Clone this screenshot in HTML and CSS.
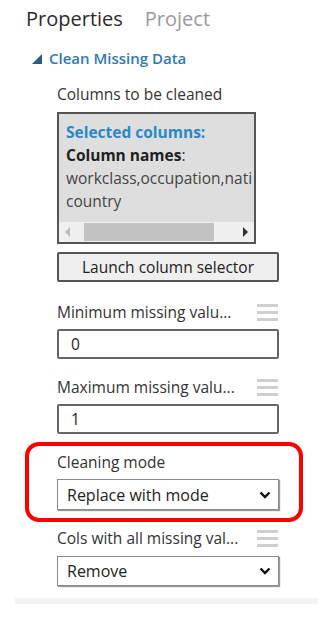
FILE: index.html
```html
<!DOCTYPE html>
<html lang="en">

<head>
    <meta charset="UTF-8">
    <title>Properties</title>
    <link rel="stylesheet" href="styles.css">
</head>

<body>
    <div class="tabs">
        <span class="tab active">Properties</span>
        <span class="tab">Project</span>
    </div>
    <div class="section-title">
        <span class="caret"></span>
        <span>Clean Missing Data</span>
    </div>
    <div class="content">
        <div class="label first">Columns to be cleaned</div>
        <div class="col-box">
            <div class="col-text">
                <div class="sel-title">Selected columns:</div>
                <div class="col-names"><b>Column names</b>:</div>
                <div class="col-list">workclass,occupation,nati</div>
                <div class="col-list">country</div>
            </div>
            <div class="hscroll">
                <span class="arr arr-left"></span>
                <span class="thumb"></span>
                <span class="arr arr-right"></span>
            </div>
        </div>
        <button class="btn">Launch column selector</button>

        <div class="label-row">
            <span>Minimum missing valu...</span>
            <span class="menu"><i></i><i></i><i></i></span>
        </div>
        <div class="input">0</div>

        <div class="label-row">
            <span>Maximum missing valu...</span>
            <span class="menu"><i></i><i></i><i></i></span>
        </div>
        <div class="input">1</div>

        <div class="highlight">
            <div class="label-row plain">
                <span>Cleaning mode</span>
            </div>
            <div class="select">
                <span>Replace with mode</span>
                <svg width="12" height="8" viewBox="0 0 12 8"><path d="M1.5 1.5 L6 6 L10.5 1.5" fill="none" stroke="#111" stroke-width="2.4"/></svg>
            </div>
        </div>

        <div class="label-row after">
            <span>Cols with all missing val...</span>
            <span class="menu"><i></i><i></i><i></i></span>
        </div>
        <div class="select last">
            <span>Remove</span>
            <svg width="12" height="8" viewBox="0 0 12 8"><path d="M1.5 1.5 L6 6 L10.5 1.5" fill="none" stroke="#111" stroke-width="2.4"/></svg>
        </div>
    </div>
    <div class="footer-band"></div>
</body>

</html>
```

FILE: styles.css
```css
* {
    box-sizing: border-box;
}

body {
    margin: 0;
    background: #fff;
    font-family: "Open Sans", "Noto Sans", sans-serif;
    color: #333;
}

.tabs {
    height: 40px;
    padding: 4px 0 0 26px;
    display: flex;
    gap: 22px;
    font-size: 20px;
    line-height: 30px;
}

.tab {
    color: #9a9a9a;
}

.tab.active {
    color: #2b2b2b;
}

.section-title {
    height: 36px;
    padding-left: 32px;
    display: flex;
    align-items: center;
    gap: 7px;
    font-size: 15px;
    font-weight: 600;
    color: #3079b5;
}

.caret {
    width: 0;
    height: 0;
    border-left: 10px solid transparent;
    border-bottom: 10px solid #2a5d86;
    margin-top: 2px;
}

.content {
    padding-left: 57px;
    width: 279px;
    font-size: 15.5px;
}

.label.first {
    height: 36px;
    line-height: 36px;
}

.col-box {
    width: 199px;
    height: 132px;
    border: 2px solid #555;
    background: #dedede;
    display: flex;
    flex-direction: column;
}

.col-text {
    flex: 1;
    padding: 7px 0 0 7px;
    line-height: 23px;
    white-space: nowrap;
}

.sel-title {
    color: #2a88c8;
    font-weight: 700;
}

.col-names b {
    color: #1f1f1f;
}

.col-list {
    color: #444;
}

.hscroll {
    height: 20px;
    background: #f0f0f0;
    display: flex;
    align-items: center;
    padding: 0 6px;
}

.thumb {
    width: 130px;
    height: 18px;
    background: #c2c2c2;
    margin: 0 auto 0 14px;
}

.arr {
    width: 0;
    height: 0;
    border-top: 5px solid transparent;
    border-bottom: 5px solid transparent;
}

.arr-left {
    border-right: 5px solid #bbb;
}

.arr-right {
    border-left: 5px solid #333;
}

.btn {
    display: block;
    margin-top: 8px;
    width: 222px;
    height: 30px;
    border: 2px solid #555;
    border-radius: 2px;
    background: #efefef;
    font-family: inherit;
    font-size: 15.5px;
    color: #222;
    padding: 0;
}

.label-row {
    margin-top: 18px;
    height: 24px;
    line-height: 24px;
    display: flex;
    justify-content: space-between;
    align-items: center;
    width: 222px;
}

.menu {
    width: 21px;
    display: flex;
    flex-direction: column;
    gap: 4px;
    margin-right: 1px;
}

.menu i {
    display: block;
    height: 3px;
    background: #cfcfcf;
}

.input {
    margin-top: 5px;
    width: 222px;
    height: 30px;
    border: 2px solid #666;
    border-radius: 2px;
    padding-left: 12px;
    line-height: 26px;
    color: #222;
    margin-bottom: -1px;
}

.input + .label-row {
    margin-top: 17px;
}

.highlight {
    margin: 9px 0 0 -32px;
    width: 278px;
    height: 80px;
    border: 4px solid #f00;
    border-radius: 14px;
    padding: 4px 20px 0 28px;
}

.label-row.plain {
    margin-top: 0;
}

.select {
    margin-top: 5px;
    width: 222px;
    height: 31px;
    border: 1px solid #8a8a8a;
    box-shadow: 1px 1px 1px #999;
    display: flex;
    align-items: center;
    justify-content: space-between;
    padding: 0 7px 0 9px;
    color: #222;
    font-size: 16px;
}

.label-row.after {
    margin-top: 4px;
}

.select.last {
    margin-top: 6px;
    height: 30px;
}

.footer-band {
    margin: 12px 0 0 15px;
    width: 303px;
    height: 6px;
    background: #f3f3f3;
}
```
